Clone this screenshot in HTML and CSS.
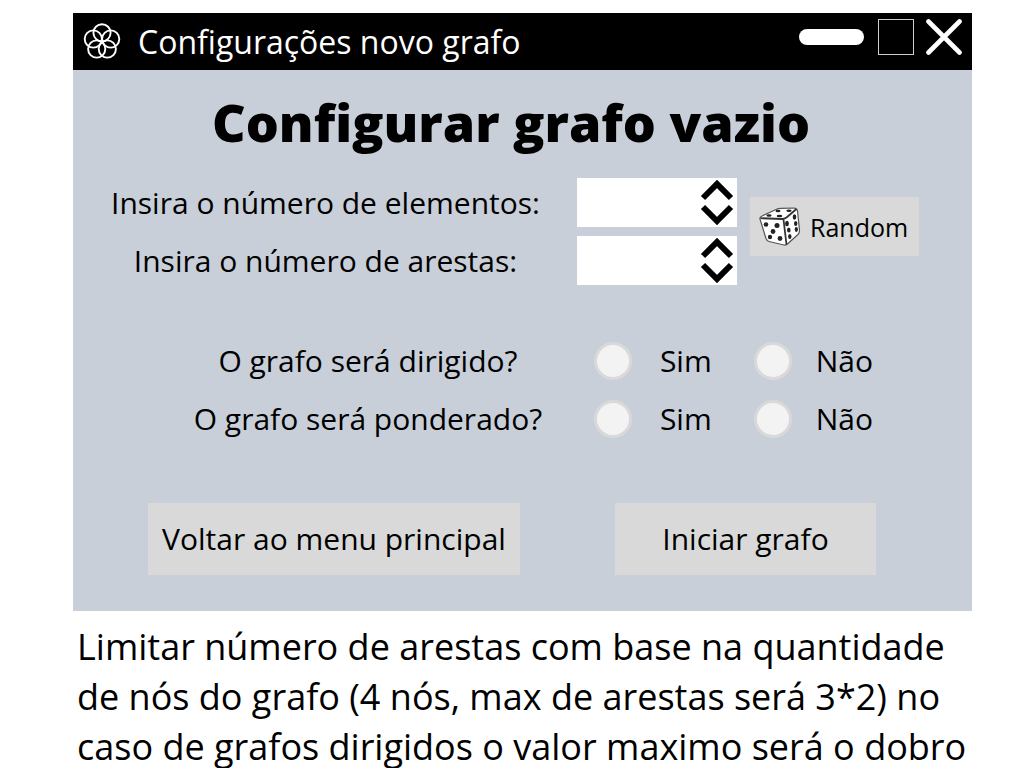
FILE: index.html
```html
<!DOCTYPE html>
<html lang="pt-BR">
<head>
  <meta charset="utf-8">
  <meta name="viewport" content="width=device-width, initial-scale=1">
  <title>Configurações novo grafo</title>
  <link rel="stylesheet" href="styles.css">
</head>
<body>
  <main class="page">
    <section class="window">
      <header class="titlebar">
        <svg class="logo" viewBox="0 0 38 38" aria-hidden="true">
          <g fill="none" stroke="#fff" stroke-width="1.9">
            <circle cx="19" cy="9.8" r="8.6"/>
            <circle cx="27.700" cy="16" r="8.6"/>
            <circle cx="24.300" cy="26" r="8.6"/>
            <circle cx="13.700" cy="26" r="8.6"/>
            <circle cx="10.300" cy="16" r="8.6"/>
          </g>
        </svg>
        <span class="caption">Configurações novo grafo</span>
        <div class="controls">
          <button class="control minimize" type="button" aria-label="Minimizar"></button>
          <button class="control maximize" type="button" aria-label="Maximizar"></button>
          <button class="control close" type="button" aria-label="Fechar">
            <svg class="close-icon" viewBox="0 0 36 36" aria-hidden="true">
              <path d="M2.5 2.5 33.5 33.5M33.5 2.5 2.5 33.5" stroke="#fff" stroke-width="4.6" stroke-linecap="round"/>
            </svg>
          </button>
        </div>
      </header>

      <form class="form">
        <h1 class="heading">Configurar grafo vazio</h1>

        <div class="numbers">
          <div class="number-rows">
            <div class="number-row">
              <label class="label" for="elementos">Insira o número de elementos:</label>
              <div class="spinner">
                <input class="number" id="elementos" type="number" min="0">
                <div class="steps">
                  <button class="step" type="button" aria-label="Aumentar elementos"><svg class="chevron" viewBox="0 0 34 21" aria-hidden="true"><path d="M3 18 17 4 31 18" fill="none" stroke="#000" stroke-width="6"/></svg></button>
                  <button class="step" type="button" aria-label="Diminuir elementos"><svg class="chevron" viewBox="0 0 34 21" aria-hidden="true"><path d="M3 3 17 17 31 3" fill="none" stroke="#000" stroke-width="6"/></svg></button>
                </div>
              </div>
            </div>
            <div class="number-row">
              <label class="label" for="arestas">Insira o número de arestas:</label>
              <div class="spinner">
                <input class="number" id="arestas" type="number" min="0">
                <div class="steps">
                  <button class="step" type="button" aria-label="Aumentar arestas"><svg class="chevron" viewBox="0 0 34 21" aria-hidden="true"><path d="M3 18 17 4 31 18" fill="none" stroke="#000" stroke-width="6"/></svg></button>
                  <button class="step" type="button" aria-label="Diminuir arestas"><svg class="chevron" viewBox="0 0 34 21" aria-hidden="true"><path d="M3 3 17 17 31 3" fill="none" stroke="#000" stroke-width="6"/></svg></button>
                </div>
              </div>
            </div>
          </div>
          <button class="random" type="button">
            <svg class="dice" viewBox="0 0 42 40" aria-hidden="true">
              <path d="M1 12Q0.500 10 3 9L17 2.500Q19 1.500 22 1.400L35 1Q38 1 38.500 4L40.500 23Q40.700 25.500 39 27.500L29 36.500Q27 38.500 25 38L10 34.500Q8 34 7 31.500Z" fill="#fff" stroke="#555" stroke-width="1.200"/>
              <path d="M1.500 11.200 23 12Q25.500 12 27.500 10.500L37.500 2M24.500 12.500 27.500 37.500" fill="none" stroke="#333" stroke-width="1.800"/>
              <g fill="#222">
                <ellipse cx="10" cy="8.500" rx="2.600" ry="1.300"/><ellipse cx="20.500" cy="9" rx="2.800" ry="1.300"/>
                <ellipse cx="19" cy="4" rx="2.500" ry="1.200"/><ellipse cx="30" cy="3.800" rx="2.600" ry="1.200"/>
                <circle cx="7" cy="17.500" r="2.300"/><circle cx="18" cy="18.500" r="2.500"/><circle cx="14" cy="24.500" r="2.400"/><circle cx="11" cy="30" r="2.200"/><circle cx="21" cy="31.500" r="2.400"/>
                <ellipse cx="28" cy="16.500" rx="1.900" ry="2.700"/><ellipse cx="35.500" cy="10" rx="1.800" ry="2.700"/>
                <ellipse cx="29.800" cy="23" rx="1.800" ry="2.500"/><ellipse cx="36.700" cy="16.500" rx="1.700" ry="2.500"/>
                <ellipse cx="30.800" cy="29.500" rx="1.700" ry="2.500"/><ellipse cx="37.300" cy="22.500" rx="1.600" ry="2.400"/>
              </g>
            </svg>
            Random
          </button>
        </div>

        <div class="choices">
          <div class="choice-row" role="radiogroup" aria-labelledby="dirigido">
            <span class="label" id="dirigido">O grafo será dirigido?</span>
            <label class="option"><input class="radio" type="radio" name="dirigido">Sim</label>
            <label class="option option-no"><input class="radio" type="radio" name="dirigido">Não</label>
          </div>
          <div class="choice-row" role="radiogroup" aria-labelledby="ponderado">
            <span class="label" id="ponderado">O grafo será ponderado?</span>
            <label class="option"><input class="radio" type="radio" name="ponderado">Sim</label>
            <label class="option option-no"><input class="radio" type="radio" name="ponderado">Não</label>
          </div>
        </div>

        <div class="actions">
          <button class="action" type="button">Voltar ao menu principal</button>
          <button class="action action-start" type="submit">Iniciar grafo</button>
        </div>
      </form>
    </section>

    <p class="note">Limitar número de arestas com base na quantidade de nós do grafo (4 nós, max de arestas será 3*2) no caso de grafos dirigidos o valor maximo será o dobro</p>
  </main>
</body>
</html>
```

FILE: styles.css
```css
* {
  box-sizing: border-box;
}

body {
  margin: 0;
  background: #fff;
  color: #000;
  font-family: "Open Sans", "Noto Sans", sans-serif;
  font-size: 30px;
  line-height: 40px;
}

button,
input {
  margin: 0;
  padding: 0;
  border: 0;
  border-radius: 0;
  color: inherit;
  font: inherit;
}

.page {
  padding: 13px 52px 0 73px;
}

.window {
  background: #c8cfd9;
}

.titlebar {
  display: flex;
  align-items: center;
  height: 57px;
  padding: 0 10px;
  background: #000;
  color: #fff;
}

.logo {
  flex: none;
  width: 38px;
  height: 38px;
}

.caption {
  flex: 1;
  padding-left: 17px;
  font-size: 32px;
}

.controls {
  display: flex;
  align-items: center;
  gap: 14px;
  padding-bottom: 10px;
}

.control {
  background: none;
}

.minimize {
  width: 65px;
  height: 16px;
  border-radius: 8px;
  background: #fff;
}

.maximize {
  width: 36px;
  height: 36px;
  border: 1px solid #ccc;
}

.close {
  width: 36px;
  height: 36px;
  margin-left: -2px;
}

.close-icon,
.chevron {
  display: block;
  width: 100%;
}

.form {
  padding-bottom: 36px;
}

.heading {
  margin: 0;
  padding: 16px 23px 20px 0;
  font-size: 52px;
  font-weight: 800;
  line-height: 72px;
  text-align: center;
}

.numbers {
  display: flex;
  gap: 13px;
  padding: 0 53px 0 14px;
}

.number-rows {
  display: flex;
  flex: 1;
  flex-direction: column;
  gap: 9px;
}

.number-row {
  display: flex;
  align-items: center;
  gap: 13px;
}

.label {
  flex: 1;
  text-align: center;
}

.spinner {
  display: flex;
  width: 160px;
  height: 49px;
  padding-right: 3px;
  background: #fff;
}

.number {
  flex: 1;
  min-width: 0;
  padding-left: 10px;
  background: none;
  appearance: textfield;
}

.number::-webkit-inner-spin-button {
  appearance: none;
}

.steps {
  display: flex;
  flex-direction: column;
  justify-content: center;
  gap: 3px;
  width: 34px;
}

.step {
  background: none;
}

.random {
  display: flex;
  align-items: center;
  gap: 9px;
  width: 169px;
  height: 59px;
  margin-top: 19px;
  padding-left: 9px;
  background: #d9d9d9;
  font-size: 25px;
}

.dice {
  flex: none;
  width: 42px;
  height: 40px;
}

.choices {
  display: flex;
  flex-direction: column;
  gap: 18px;
  padding: 56px 99px 0 90px;
}

.choice-row {
  display: flex;
  align-items: center;
}

.option {
  display: flex;
  align-items: center;
  gap: 28px;
  padding-left: 21px;
}

.option-no {
  gap: 24px;
  padding-left: 42px;
}

.radio {
  width: 38px;
  height: 38px;
  border: 3px solid #d9d9d9;
  border-radius: 50%;
  background: #f3f3f3;
  appearance: none;
}

.radio:checked {
  background: radial-gradient(#000 40%, #f3f3f3 45%);
}

.actions {
  display: flex;
  justify-content: space-between;
  padding: 64px 96px 0 75px;
}

.action {
  width: 372px;
  height: 72px;
  background: #d9d9d9;
}

.action-start {
  width: 261px;
}

.note {
  margin: 0;
  padding: 11px 0 0 4px;
  font-size: 36px;
  line-height: 50px;
}
```
